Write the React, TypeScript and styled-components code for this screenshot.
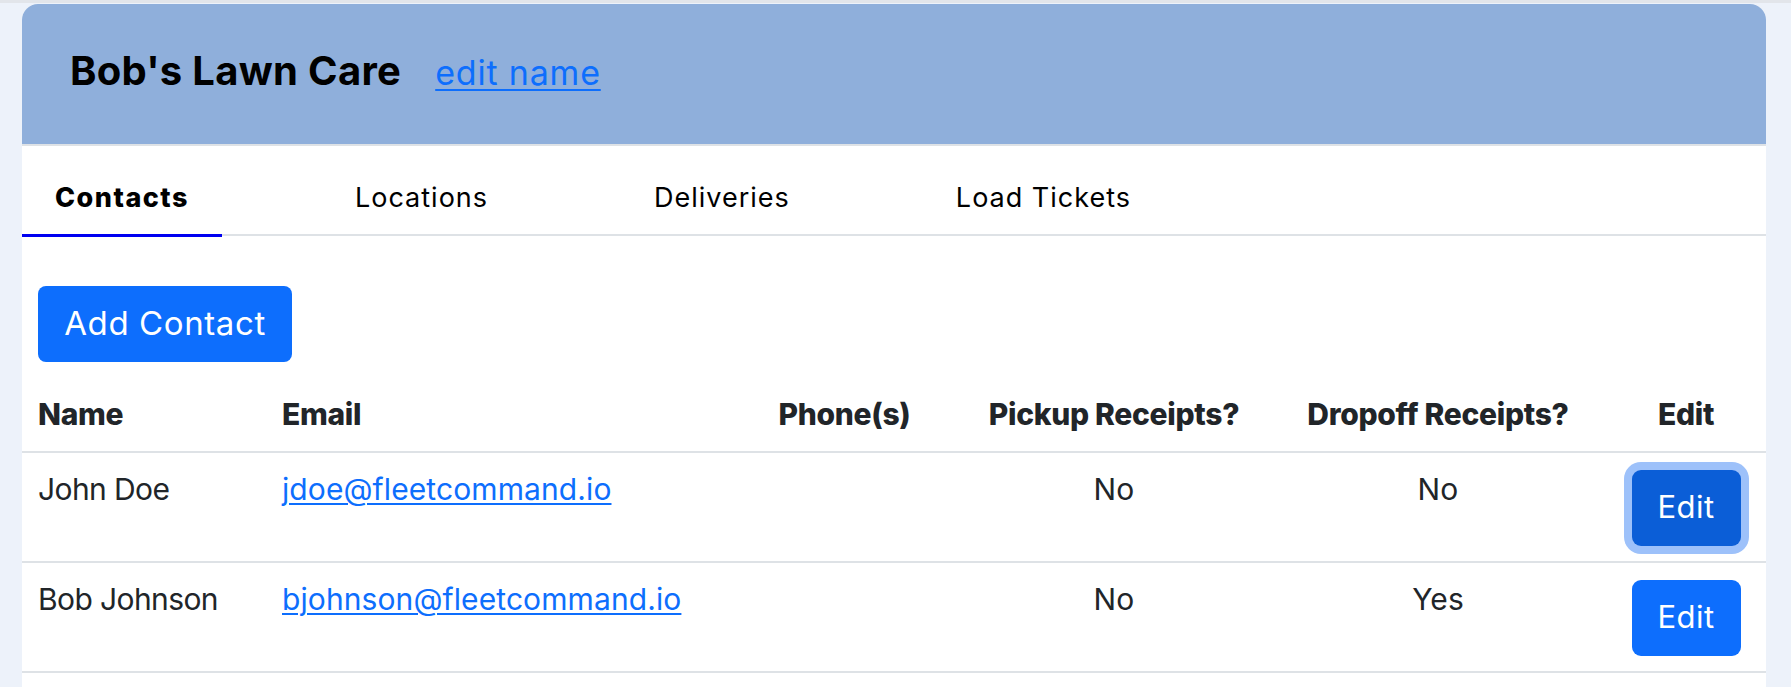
import React from "react";
import styled, { createGlobalStyle } from "styled-components";

const Global = createGlobalStyle`
  html, body { margin: 0; padding: 0; }
  body {
    background: #edf2fa;
    border-top: 3px solid #e2e5ea;
    padding: 1px 25px 0 22px;
    font-family: Inter, "Open Sans", "Liberation Sans", sans-serif;
    color: #212529;
    min-height: 683px;
    box-sizing: border-box;
    overflow: hidden;
  }
`;

const Card = styled.div`
  background: #ffffff;
  border-radius: 16px 16px 0 0;
  overflow: hidden;
  min-height: 700px;
`;

const Header = styled.div`
  background: #8fafdb;
  height: 142px;
  box-sizing: border-box;
  padding: 0 0 6px 48px;
  display: flex;
  align-items: center;
  gap: 34px;
  border-bottom: 2px solid #dee2e6;
`;

const Title = styled.h1`
  margin: 0;
  font-size: 40px;
  font-weight: 700;
  letter-spacing: 0.3px;
  color: #000;
  line-height: 1.2;
`;

const EditName = styled.a`
  font-size: 34px;
  color: #0d6efd;
  text-decoration: underline;
  text-underline-offset: 4px;
  text-decoration-thickness: 2px;
  letter-spacing: 0.8px;
  cursor: pointer;
  line-height: 1.2;
  padding-top: 4px;
`;

const TabBar = styled.div`
  display: flex;
  height: 90px;
  box-sizing: border-box;
  border-bottom: 2px solid #dee2e6;
`;

const Tab = styled.div<{ $active?: boolean }>`
  padding: 32px 33px 0 33px;
  margin-right: 100px;
  margin-bottom: -2px;
  font-size: 27px;
  line-height: 40px;
  letter-spacing: ${(p) => (p.$active ? "1.5px" : "1px")};
  font-weight: ${(p) => (p.$active ? 800 : 400)};
  color: #000;
  border-bottom: 3px solid ${(p) => (p.$active ? "#0000f0" : "transparent")};
  box-sizing: border-box;
  height: 91px;
`;

const Toolbar = styled.div`
  padding: 50px 16px 14px 16px;
`;

const PrimaryButton = styled.button<{ $focused?: boolean }>`
  font-family: inherit;
  background: ${(p) => (p.$focused ? "#0b5ed7" : "#0d6efd")};
  color: #fff;
  border: none;
  cursor: pointer;
  box-shadow: ${(p) => (p.$focused ? "0 0 0 8px #9dc1fa" : "none")};
`;

const AddButton = styled(PrimaryButton)`
  width: 254px;
  height: 76px;
  border-radius: 8px;
  font-size: 33px;
  letter-spacing: 0.6px;
  padding: 0 0 2px 0;
`;

const EditButton = styled(PrimaryButton)`
  width: 109px;
  height: 76px;
  border-radius: 9px;
  font-size: 31px;
  letter-spacing: 0.4px;
  padding: 0 0 3px 0;
`;

const Row = styled.div<{ $head?: boolean }>`
  display: grid;
  grid-template-columns: 244px 465px 227px 312px 336px 1fr;
  border-bottom: 2px solid #dee2e6;
  height: ${(p) => (p.$head ? "77px" : "110px")};
  box-sizing: border-box;
  align-items: ${(p) => (p.$head ? "center" : "start")};
`;

const Cell = styled.div<{ $head?: boolean; $center?: boolean; $tight?: boolean }>`
  padding: ${(p) => (p.$head ? "0 16px" : "15px 16px 0 16px")};
  text-align: ${(p) => (p.$center ? "center" : "left")};
  font-size: 30px;
  font-weight: ${(p) => (p.$head ? 800 : 400)};
  line-height: 42px;
  letter-spacing: ${(p) => (p.$head ? "-0.3px" : p.$tight ? "-0.6px" : "0.1px")};
  color: #212529;
  white-space: nowrap;
`;

const EditCell = styled.div`
  display: flex;
  justify-content: center;
  padding-top: 17px;
`;

const Mail = styled.a`
  color: #0d6efd;
  text-decoration: underline;
  text-underline-offset: 3px;
  text-decoration-thickness: 2px;
`;

const contacts = [
  { name: "John Doe", email: "jdoe@fleetcommand.io", pickup: "No", dropoff: "No", focused: true },
  { name: "Bob Johnson", email: "bjohnson@fleetcommand.io", pickup: "No", dropoff: "Yes", focused: false },
];

export default function App() {
  return (
    <>
      <Global />
      <Card>
        <Header>
          <Title>Bob's Lawn Care</Title>
          <EditName>edit name</EditName>
        </Header>
        <TabBar>
          <Tab $active>Contacts</Tab>
          <Tab>Locations</Tab>
          <Tab>Deliveries</Tab>
          <Tab>Load Tickets</Tab>
        </TabBar>
        <Toolbar>
          <AddButton>Add Contact</AddButton>
        </Toolbar>
        <Row $head>
          <Cell $head>Name</Cell>
          <Cell $head>Email</Cell>
          <Cell $head $center>Phone(s)</Cell>
          <Cell $head $center>Pickup Receipts?</Cell>
          <Cell $head $center>Dropoff Receipts?</Cell>
          <Cell $head $center>Edit</Cell>
        </Row>
        {contacts.map((c) => (
          <Row key={c.email}>
            <Cell $tight>{c.name}</Cell>
            <Cell>
              <Mail>{c.email}</Mail>
            </Cell>
            <Cell $center></Cell>
            <Cell $center>{c.pickup}</Cell>
            <Cell $center>{c.dropoff}</Cell>
            <EditCell>
              <EditButton $focused={c.focused}>Edit</EditButton>
            </EditCell>
          </Row>
        ))}
      </Card>
    </>
  );
}
